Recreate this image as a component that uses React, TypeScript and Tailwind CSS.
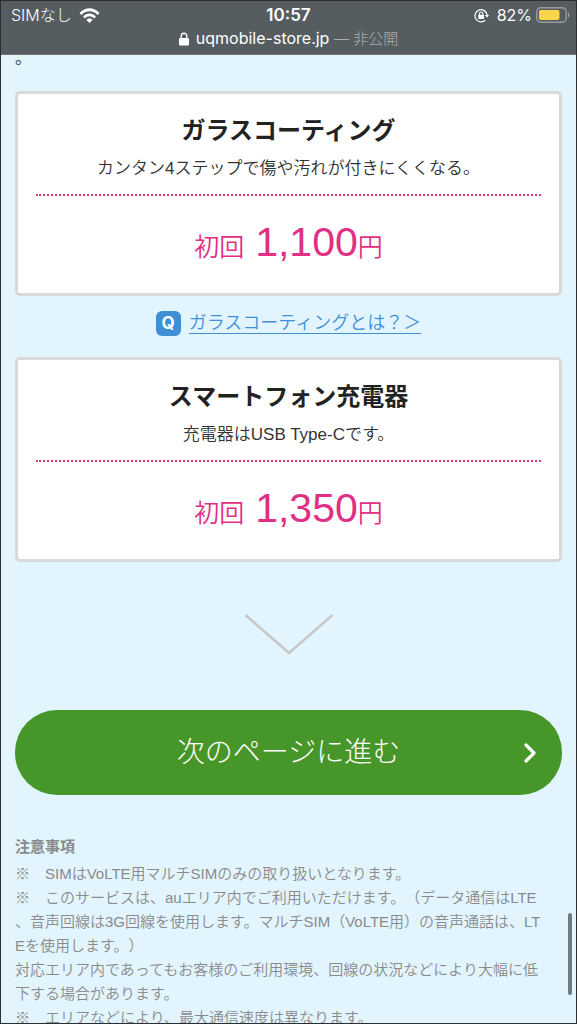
import React from "react";

function StatusBar() {
  return (
    <header className="relative z-10 border-b border-[#70777a] bg-[#565d60] px-[10px] pt-[2px] font-['Inter','Noto_Sans_CJK_JP',sans-serif] text-[16px] text-white">
      <div className="grid grid-cols-3 items-center leading-6">
        <div className="flex items-center gap-[7px]">
          <span className="font-light">SIMなし</span>
          <svg viewBox="0 0 42 30" className="h-[15px] w-[21px]" aria-label="Wi-Fi">
            <path d="M1 10C12-2.500 30-2.500 41 10l-3.800 3.800C28.500 3.800 13.500 3.800 4.800 13.800z" fill="white" />
            <path d="M8 17.200c7.500-8 18.500-8 26 0l-3.800 3.800c-5-5.800-13.400-5.800-18.400 0z" fill="white" />
            <path d="M21 30l-6-6.200c3-3.500 9-3.500 12 0z" fill="white" />
          </svg>
        </div>
        <div className="text-center text-[17px] font-semibold">10:57</div>
        <div className="flex items-center justify-end">
          <svg viewBox="0 0 32 32" className="mr-2 h-[15px] w-[15px]" fill="none" aria-label="画面の向きのロック">
            <path d="M24 26.200A13 13 0 1 1 28 15" stroke="white" strokeWidth="2.600" />
            <path d="M23.500 15H32l-4.200 6z" fill="white" />
            <rect x="9" y="14.500" width="12.500" height="9" rx="1.500" fill="white" />
            <path d="M11.700 15.500V12a3.600 3.600 0 0 1 7.200 0v3.500" stroke="white" strokeWidth="2.200" />
          </svg>
          <span className="mr-1">82%</span>
          <svg viewBox="0 0 34 16" className="-mr-1 h-4 w-[34px]" fill="none" aria-label="バッテリー">
            <rect x=".7" y=".7" width="29.600" height="14.600" rx="4.200" stroke="#969b9d" strokeWidth="1.400" />
            <rect x="3" y="3" width="20.500" height="10" rx="2" fill="#f9d648" />
            <path d="M32 5c2 1.500 2 4.500 0 6z" fill="#969b9d" />
          </svg>
        </div>
      </div>
      <div className="flex items-center justify-center gap-[7px] pb-1 leading-[22px]">
        <svg viewBox="0 0 20 28" className="h-[14px] w-[10px]" fill="none" aria-label="保護された接続">
          <rect y="12" width="20" height="15" rx="2.500" fill="white" />
          <path d="M4.500 13V8a5.500 5.500 0 0 1 11 0v5" stroke="white" strokeWidth="2.600" />
        </svg>
        <div className="text-[16px]">
          uqmobile-store.jp{" "}
          <span className="text-[15px] font-light text-[#a9aeb0]">— 非公開</span>
        </div>
      </div>
    </header>
  );
}

function OptionCard({ title, note, price }: { title: string; note: string; price: string }) {
  return (
    <section className="rounded-[5px] border-[3px] border-[#d9d9d9] bg-white px-[18px] pt-[21px] pb-[18px] text-center">
      <h2 className="text-[24px] leading-8 font-bold text-[#222]">{title}</h2>
      <p className="mt-[10px] border-b-2 border-dotted border-[#de2f85] pb-[13px] text-[17px] leading-6 font-[350] text-[#333]">
        {note}
      </p>
      <p className="pt-[18px] text-[25px] leading-[56px] font-[350] text-[#e02f84]">
        初回 <span className="ml-1 text-[41px] font-normal">{price}</span>円
      </p>
    </section>
  );
}

const NOTES = [
  "※　SIMはVoLTE用マルチSIMのみの取り扱いとなります。",
  "※　このサービスは、auエリア内でご利用いただけます。（データ通信はLTE、音声回線は3G回線を使用します。マルチSIM（VoLTE用）の音声通話は、LTEを使用します。）",
  "対応エリア内であってもお客様のご利用環境、回線の状況などにより大幅に低下する場合があります。",
  "※　エリアなどにより、最大通信速度は異なります。",
];

export default function App() {
  return (
    <div
      lang="ja"
      className="relative flex h-screen flex-col overflow-hidden border border-[#2b2f33] bg-[#e2f5fe] font-['Liberation_Sans','Noto_Sans_CJK_JP',sans-serif] [text-spacing-trim:space-all]"
    >
      <StatusBar />
      <main className="px-[14px]">
        <p className="-mt-2 text-[17px] leading-6 text-[#444]">。</p>
        <div className="pt-5">
          <OptionCard
            title="ガラスコーティング"
            note="カンタン4ステップで傷や汚れが付きにくくなる。"
            price="1,100"
          />
        </div>
        <a
          href="#coating"
          className="mt-[15px] mb-[21px] flex items-center justify-center gap-2 text-[18px] leading-[25px] font-[350] text-[#3f8fd9]"
        >
          <span className="flex size-[25px] items-center justify-center rounded-[6px] bg-[#3f8fd6] font-['Inter',sans-serif] text-[17px] font-bold text-white">
            Q
          </span>
          <span className="border-b border-[#3f8fd9] leading-5">ガラスコーティングとは？＞</span>
        </a>
        <OptionCard title="スマートフォン充電器" note="充電器はUSB Type-Cです。" price="1,350" />
        <svg viewBox="0 0 90 42" className="mx-auto mt-[51px] h-[42px] w-[90px]" fill="none" aria-hidden="true">
          <path d="M1.500 2L45 40 88.500 2" stroke="#c8c8c8" strokeWidth="2.600" />
        </svg>
        <button
          type="button"
          className="mt-[55px] grid h-[85px] w-full grid-cols-[38px_1fr_38px] items-center rounded-[42px] bg-[#47962a] text-[28px] font-light text-white"
        >
          <span className="col-start-2">次のページに進む</span>
          <svg viewBox="0 0 12 20" className="h-5 w-3" fill="none" aria-hidden="true">
            <path d="M2 2l8 8-8 8" stroke="white" strokeWidth="3.200" strokeLinecap="round" strokeLinejoin="round" />
          </svg>
        </button>
        <section className="mt-10 pr-3 text-[15px] leading-6 text-[#8a8a8a] [line-break:anywhere]">
          <h3 className="mb-[3px] font-bold">注意事項</h3>
          {NOTES.map((note) => (
            <p key={note} className="font-[350]">
              {note}
            </p>
          ))}
        </section>
      </main>
      <div className="absolute right-1 bottom-7 h-[82px] w-1 rounded-full bg-[#707a80]" aria-hidden="true" />
    </div>
  );
}
